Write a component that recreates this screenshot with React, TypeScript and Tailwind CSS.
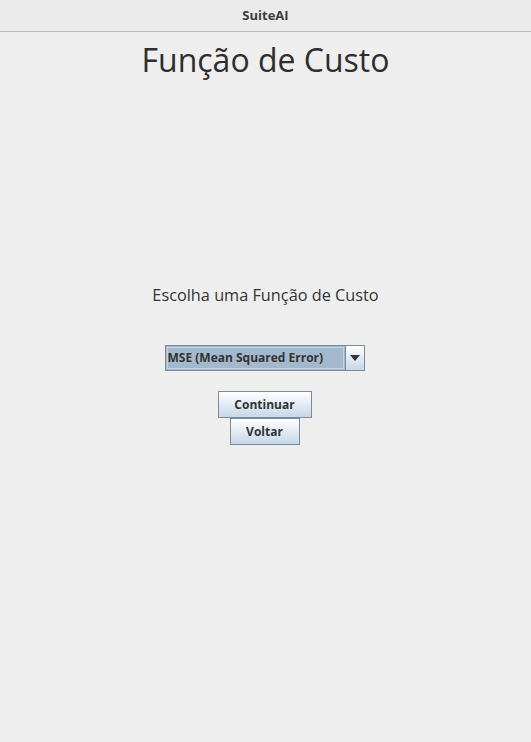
export default function App() {
  return (
    <div className="flex h-[742px] w-[531px] flex-col bg-[#eeeeee] font-['Open_Sans',sans-serif] text-[#333333]">
      {/* barra de título */}
      <div className="flex h-[32px] shrink-0 items-center justify-center border-b border-[#bcbcbc] bg-[#ebebeb]">
        <span className="text-[13px] font-bold text-[#3c3c3c]">SuiteAI</span>
      </div>

      <h1 className="mt-[6px] text-center text-[32px] leading-[44px] text-[#2e2e2e]">Função de Custo</h1>

      <p className="mt-[201px] text-center text-[16.3px] leading-[24px] text-[#333333]">Escolha uma Função de Custo</p>

      {/* combo */}
      <div className="mt-[38px] flex justify-center">
        <div className="flex h-[26px] w-[200px] -translate-x-[1px] border border-[#7a8a99] bg-[#a3b8cc]">
          <div className="m-[1px] flex flex-1 items-center border border-[#c6d4e2] text-[12px] font-bold text-[#333333]">
            MSE (Mean Squared Error)
          </div>
          <div className="flex w-[19px] items-center justify-center border-l border-[#7a8a99] bg-gradient-to-b from-[#ffffff] to-[#c5d6e8]">
            <svg width="10" height="6" viewBox="0 0 10 6">
              <path d="M0 0H10L5 6Z" fill="#333333" />
            </svg>
          </div>
        </div>
      </div>

      {/* botões */}
      <div className="mt-[20px] flex flex-col items-center">
        <button className="h-[27px] w-[94px] -translate-x-[1px] border border-[#7a8a99] bg-gradient-to-b from-[#ffffff] to-[#c6d7e9] text-[12px] font-bold text-[#333333]">
          Continuar
        </button>
        <button className="h-[27px] w-[70px] -translate-x-[1px] border border-[#7a8a99] bg-gradient-to-b from-[#ffffff] to-[#c6d7e9] text-[12px] font-bold text-[#333333]">
          Voltar
        </button>
      </div>
    </div>
  );
}
